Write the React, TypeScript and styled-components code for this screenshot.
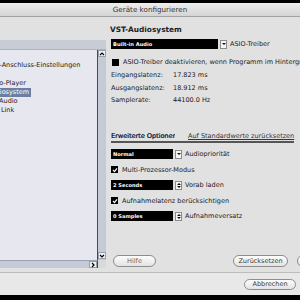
import React from "react";
import styled, { createGlobalStyle } from "styled-components";

const font = `"DejaVu Sans", Verdana, sans-serif`;

const GlobalStyle = createGlobalStyle`
  html, body {
    margin: 0;
    padding: 0;
    background: #000;
  }
  body {
    width: 300px;
    height: 300px;
    overflow: hidden;
    font-family: ${font};
  }
`;

const Screen = styled.div`
  width: 300px;
  height: 300px;
  overflow: hidden;
  background: #000;
  padding-top: 3px;
  box-sizing: border-box;
`;

const Window = styled.div`
  width: 420px;
  height: 292px;
  margin-left: -60px;
  background: #e1e1e1;
  display: flex;
  flex-direction: column;
`;

const TitleBar = styled.div`
  flex-shrink: 0;
  height: 13px;
  line-height: 13px;
  text-align: center;
  font-size: 7.2px;
  color: #333;
  background: linear-gradient(#eeeeee, #d4d4d4);
  border-bottom: 1px solid #a2a2a2;
`;

const Body = styled.div`
  flex-shrink: 0;
  display: flex;
  height: 255px;
  padding: 0 10px;
  box-sizing: border-box;
`;

/* left: device tree */

const DevicePanel = styled.div`
  flex-shrink: 0;
  width: 156px;
  height: 228px;
  margin-top: 23px;
  display: flex;
  flex-direction: column;
`;

const PanelHeader = styled.div`
  height: 9px;
  background: #c8ccd4;
  border-bottom: 1px solid #adb1ba;
`;

const PanelMain = styled.div`
  flex: 1;
  min-height: 0;
  display: flex;
`;

const TreeList = styled.div`
  flex: 1;
  overflow: hidden;
  padding-top: 11px;
  background: #e7e7ef;
  border-right: 1px solid #4a4a4a;
`;

const TreeItem = styled.div<{ $indent: number }>`
  height: 9px;
  line-height: 9px;
  padding-left: ${(p) => p.$indent}px;
  font-size: 6.5px;
  color: #1b1b1b;
  white-space: nowrap;
`;

const Selected = styled.span`
  display: inline-block;
  height: 9px;
  padding: 0 2px 0 1px;
  background: #6a7fa1;
  color: #fff;
`;

const VScroll = styled.div`
  width: 8px;
  display: flex;
  flex-direction: column;
  justify-content: space-between;
  padding-bottom: 1px;
  box-sizing: border-box;
  background: #c4cad6;
`;

const HScrollRow = styled.div`
  height: 8px;
  display: flex;
`;

const HTrack = styled.div`
  flex: 1;
  display: flex;
  justify-content: flex-end;
  background: #c4cad6;
  border-top: 1px solid #9ca3b0;
  border-right: 1px solid #4a4a4a;
`;

const Corner = styled.div`
  width: 8px;
  background: #d9d9dc;
`;

const ScrollArrow = styled.div`
  width: 8px;
  height: 7px;
  display: flex;
  align-items: center;
  justify-content: center;
  background: #eef0f4;
  border: 1px solid #99a0ac;
  box-sizing: border-box;
`;

/* right: settings */

const Settings = styled.div`
  flex: 1;
  margin-left: 5px;
  padding: 8px 0 5px;
  display: flex;
  flex-direction: column;
  font-size: 6.5px;
  color: #1a1a1a;
`;

const SectionTitle = styled.div`
  margin-left: -1px;
  font-size: 7.4px;
  font-weight: bold;
  line-height: 10px;
  color: #222;
`;

const Row = styled.div<{ $top: number }>`
  display: flex;
  align-items: center;
  height: 10px;
  margin-top: ${(p) => p.$top}px;
  white-space: nowrap;
`;

const Field = styled.div<{ $w: number }>`
  width: ${(p) => p.$w}px;
  height: 10px;
  padding-left: 2px;
  box-sizing: border-box;
  background: #000;
  color: #fff;
  font-weight: bold;
  font-size: 5.1px;
  line-height: 10px;
`;

const ArrowBox = styled.div`
  width: 7px;
  height: 9px;
  margin-left: 2px;
  display: flex;
  flex-direction: column;
  align-items: center;
  justify-content: center;
  gap: 1px;
  background: #f5f5f5;
  border: 1px solid #8c8c8c;
  box-sizing: border-box;
`;

const FieldLabel = styled.span`
  margin-left: 3px;
`;

const Check = styled.div<{ $on?: boolean }>`
  width: 7px;
  height: 7px;
  margin-left: ${(p) => (p.$on ? 0 : 1)}px;
  display: flex;
  align-items: center;
  justify-content: center;
  background: #000;
`;

const CheckLabel = styled.span`
  margin-left: 4px;
`;

const InfoTable = styled.div`
  margin-top: 2px;
  display: grid;
  grid-template-columns: 62px auto;
  grid-auto-rows: 12.5px;
  align-items: center;
`;

const TabBar = styled.div`
  align-self: flex-start;
  display: flex;
  align-items: center;
  height: 10px;
  margin-top: 24px;
  border-bottom: 2px solid #555;
  white-space: nowrap;
`;

const Tab = styled.div`
  width: 64px;
  overflow: hidden;
  color: #17244a;
  text-shadow: 0.3px 0 0 #17244a;
`;

const ResetLink = styled.span`
  margin-left: 13px;
  color: #333;
  text-decoration: underline;
`;

const ButtonRow = styled.div`
  margin-top: auto;
  display: flex;
  align-items: center;
  gap: 9px;
  padding-left: 2px;
  padding-right: 3px;
`;

const PillButton = styled.button<{ $w: number; $dim?: boolean }>`
  width: ${(p) => p.$w}px;
  height: 12px;
  padding: 0;
  border-radius: 6px;
  border: 1px solid #8d8d8d;
  background: linear-gradient(#fdfdfd, #e3e3e3);
  font-family: ${font};
  font-size: 6.5px;
  line-height: 10px;
  color: ${(p) => (p.$dim ? "#666" : "#3a3a3a")};
`;

const Spacer = styled.div`
  flex: 1;
`;

const Footer = styled.div`
  flex: 1;
  display: flex;
  justify-content: flex-end;
  align-items: flex-start;
  gap: 8px;
  padding: 6px 10px 0 0;
  background: #e8e8e8;
  border-top: 1px solid #bcbcbc;
`;

const FooterButton = styled(PillButton)`
  height: 11px;
  line-height: 9px;
`;

const Chevron = ({ dir }: { dir: "up" | "down" | "right" }) => {
  const d =
    dir === "up" ? "M1 4 L3 2 L5 4" : dir === "down" ? "M1 2 L3 4 L5 2" : "M2 1 L4 3 L2 5";
  return (
    <svg width="6" height="6" viewBox="0 0 6 6">
      <path d={d} fill="none" stroke="#000" strokeWidth="1.2" />
    </svg>
  );
};

const Tri = ({ up }: { up?: boolean }) => (
  <svg width="4" height="2" viewBox="0 0 4 2">
    <path d={up ? "M0 2 L2 0 L4 2 Z" : "M0 0 L4 0 L2 2 Z"} fill="#111" />
  </svg>
);

const Tick = () => (
  <svg width="6" height="6" viewBox="0 0 6 6">
    <path d="M1 3 L2.5 4.6 L5 1.3" fill="none" stroke="#fff" strokeWidth="1.2" />
  </svg>
);

const tree = [
  { name: "MIDI-Anschluss-Einstellungen", indent: 35 },
  { name: "Transport", indent: 0 },
  { name: "Video-Player", indent: 35 },
  { name: "VST-Audiosystem", indent: 22, selected: true },
  { name: "Built-in Audio", indent: 24 },
  { name: "VST System Link", indent: 10 },
];

export default function App() {
  return (
    <>
      <GlobalStyle />
      <Screen>
        <Window>
          <TitleBar>Geräte konfigurieren</TitleBar>
          <Body>
            <DevicePanel>
              <PanelHeader />
              <PanelMain>
                <TreeList>
                  {tree.map((t) => (
                    <TreeItem key={t.name} $indent={t.indent}>
                      {t.selected ? <Selected>{t.name}</Selected> : t.name}
                    </TreeItem>
                  ))}
                </TreeList>
                <VScroll>
                  <ScrollArrow>
                    <Chevron dir="up" />
                  </ScrollArrow>
                  <ScrollArrow>
                    <Chevron dir="down" />
                  </ScrollArrow>
                </VScroll>
              </PanelMain>
              <HScrollRow>
                <HTrack>
                  <ScrollArrow>
                    <Chevron dir="right" />
                  </ScrollArrow>
                </HTrack>
                <Corner />
              </HScrollRow>
            </DevicePanel>

            <Settings>
              <SectionTitle>VST-Audiosystem</SectionTitle>
              <Row $top={4}>
                <Field $w={107}>Built-in Audio</Field>
                <ArrowBox>
                  <Tri />
                </ArrowBox>
                <FieldLabel>ASIO-Treiber</FieldLabel>
              </Row>
              <Row $top={8}>
                <Check />
                <CheckLabel>ASIO-Treiber deaktivieren, wenn Programm im Hintergrund</CheckLabel>
              </Row>
              <InfoTable>
                <span>Eingangslatenz:</span>
                <span>17.823 ms</span>
                <span>Ausgangslatenz:</span>
                <span>18.912 ms</span>
                <span>Samplerate:</span>
                <span>44100.0 Hz</span>
              </InfoTable>

              <TabBar>
                <Tab>Erweiterte Optionen</Tab>
                <ResetLink>Auf Standardwerte zurücksetzen</ResetLink>
              </TabBar>
              <Row $top={6.5}>
                <Field $w={62}>Normal</Field>
                <ArrowBox>
                  <Tri />
                </ArrowBox>
                <FieldLabel>Audiopriorität</FieldLabel>
              </Row>
              <Row $top={5.5}>
                <Check $on>
                  <Tick />
                </Check>
                <CheckLabel>Multi-Prozessor-Modus</CheckLabel>
              </Row>
              <Row $top={5.5}>
                <Field $w={62}>2 Seconds</Field>
                <ArrowBox>
                  <Tri up />
                  <Tri />
                </ArrowBox>
                <FieldLabel>Vorab laden</FieldLabel>
              </Row>
              <Row $top={5.5}>
                <Check $on>
                  <Tick />
                </Check>
                <CheckLabel>Aufnahmelatenz berücksichtigen</CheckLabel>
              </Row>
              <Row $top={5.5}>
                <Field $w={62}>0 Samples</Field>
                <ArrowBox>
                  <Tri up />
                  <Tri />
                </ArrowBox>
                <FieldLabel>Aufnahmeversatz</FieldLabel>
              </Row>

              <ButtonRow>
                <PillButton $w={43} $dim>
                  Hilfe
                </PillButton>
                <Spacer />
                <PillButton $w={55}>Zurücksetzen</PillButton>
                <PillButton $w={50}>Übernehmen</PillButton>
              </ButtonRow>
            </Settings>
          </Body>
          <Footer>
            <FooterButton $w={52}>Abbrechen</FooterButton>
            <FooterButton $w={46}>OK</FooterButton>
          </Footer>
        </Window>
      </Screen>
    </>
  );
}
